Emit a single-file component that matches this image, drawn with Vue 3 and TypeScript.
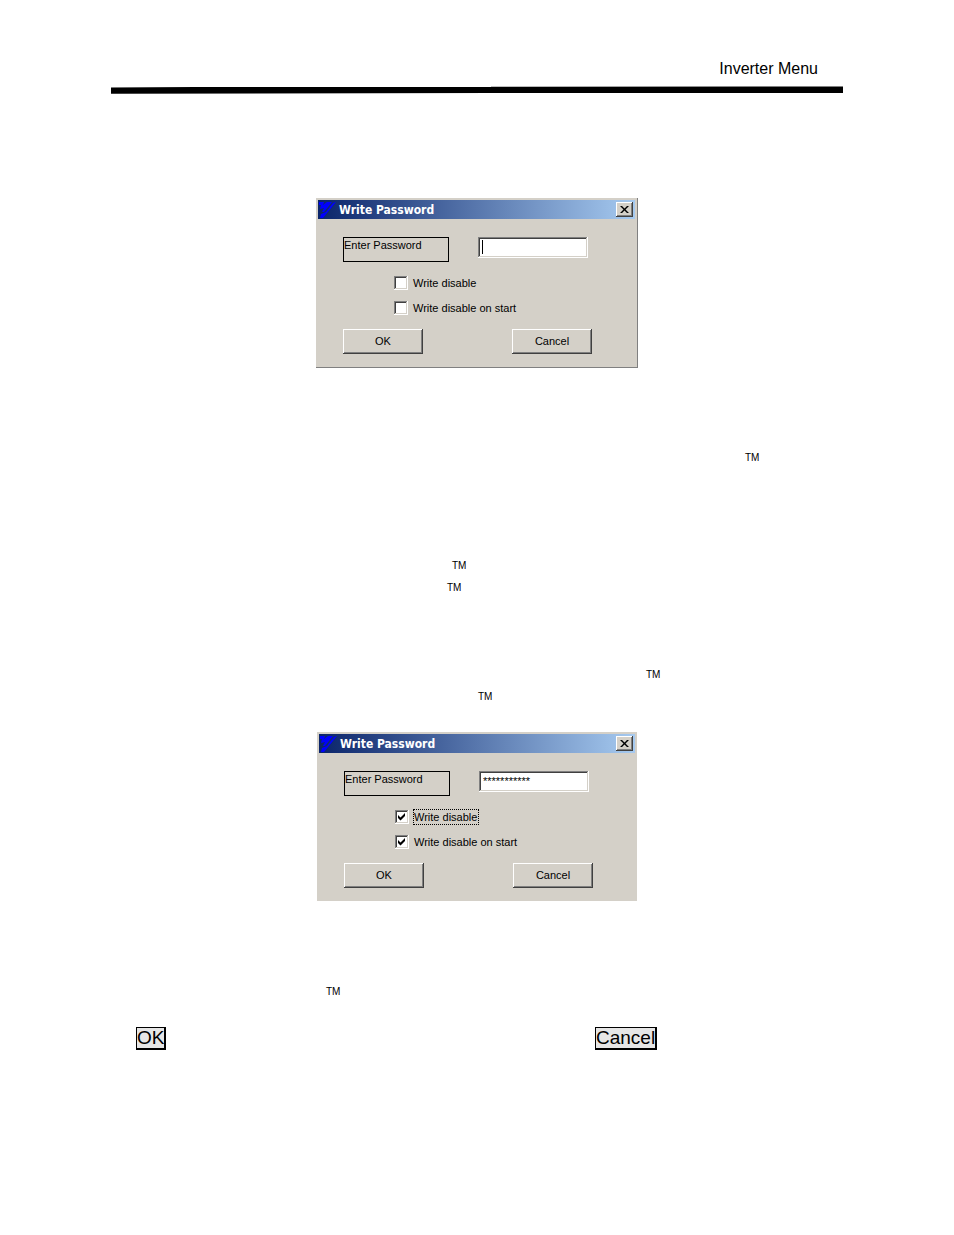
<script setup lang="ts">
import { reactive } from 'vue'

interface PasswordDialog {
  id: string
  password: string
  disable: boolean
  disableOnStart: boolean
  caret: boolean
  framed: boolean
  focused: boolean
}

const dialogs = reactive<PasswordDialog[]>([
  { id: 'empty', password: '', disable: false, disableOnStart: false, caret: true, framed: true, focused: false },
  { id: 'filled', password: '***********', disable: true, disableOnStart: true, caret: false, framed: false, focused: true },
])

const marks: Record<string, { name: string; left: number }[]> = {
  empty: [
    { name: 'first', left: 634 },
    { name: 'second', left: 341 },
    { name: 'third', left: 336 },
    { name: 'fourth', left: 535 },
    { name: 'fifth', left: 367 },
  ],
  filled: [{ name: 'last', left: 215 }],
}
</script>

<template>
  <div class="page">
    <header class="head">
      <span class="chapter">Inverter Menu</span>
      <svg class="rule" viewBox="0 0 732 8" preserveAspectRatio="none" aria-hidden="true">
        <path d="M0 1.6L85 1L380 1L380 .8L732 .4V7H380L0 7.8Z" />
      </svg>
    </header>

    <template v-for="d in dialogs" :key="d.id">
      <section class="dialog" :class="{ framed: d.framed }">
        <div class="titlebar">
          <svg class="logo" viewBox="0 0 18 18" aria-hidden="true">
            <path d="M1 1H6L5 4L9 1H14L6 11L4 11L6 7L2 8L3 4H1Z" />
            <path d="M15 2L18 1L5 17H2L3 13L8 11Z" />
          </svg>
          <h2>Write Password</h2>
          <button class="close" type="button" aria-label="Close">
            <svg viewBox="0 0 9 7" aria-hidden="true">
              <path d="M0 0H2L4.5 2.5L7 0H9L5.5 3.5L9 7H7L4.5 4.5L2 7H0L3.5 3.5Z" />
            </svg>
          </button>
        </div>
        <form class="body" @submit.prevent>
          <div class="entry">
            <label class="caption" :for="d.id + '-password'">Enter Password</label>
            <div class="field">
              <input :id="d.id + '-password'" v-model="d.password" type="text" autocomplete="off" />
              <span v-if="d.caret" class="caret"></span>
            </div>
          </div>
          <div class="options">
            <label class="option">
              <span class="box">
                <input v-model="d.disable" type="checkbox" />
                <svg v-if="d.disable" viewBox="0 0 9 9" aria-hidden="true"><path d="M1 3L3.5 5.5L8 1V4L3.5 8.5L1 6Z" /></svg>
              </span>
              <span class="option-text" :class="{ focused: d.focused }">Write disable</span>
            </label>
            <label class="option">
              <span class="box">
                <input v-model="d.disableOnStart" type="checkbox" />
                <svg v-if="d.disableOnStart" viewBox="0 0 9 9" aria-hidden="true"><path d="M1 3L3.5 5.5L8 1V4L3.5 8.5L1 6Z" /></svg>
              </span>
              <span class="option-text">Write disable on start</span>
            </label>
          </div>
          <div class="actions">
            <button class="push" type="button">OK</button>
            <button class="push" type="button">Cancel</button>
          </div>
        </form>
      </section>

      <div class="marks" :class="d.id">
        <div v-for="m in marks[d.id]" :key="m.name" class="mark" :class="m.name" :style="{ paddingLeft: m.left + 'px' }">TM</div>
      </div>
    </template>

    <div class="keys">
      <div><button class="key" type="button">OK</button></div>
      <div><button class="key" type="button">Cancel</button></div>
    </div>
  </div>
</template>

<style>
body {
  margin: 0;
  background: #fff;
}
</style>

<style scoped>
.page {
  box-sizing: border-box;
  padding: 60px 111px;
  color: #000;
  font-family: "Liberation Sans", Arial, sans-serif;
}
.head {
  display: flex;
  flex-direction: column;
  margin-bottom: 104px;
}
.chapter {
  padding-right: 25px;
  text-align: right;
  font-size: 16px;
  line-height: 18px;
}
.rule {
  display: block;
  width: 100%;
  height: 8px;
  margin-top: 8px;
}
.dialog {
  box-sizing: border-box;
  width: 320px;
  min-height: 169px;
  margin: 0 auto;
  padding: 2px;
  background: #d4d0c8;
}
.dialog.framed {
  width: 322px;
  min-height: 170px;
  border-right: 1px solid #808080;
  border-bottom: 1px solid #808080;
}
.titlebar {
  display: flex;
  align-items: center;
  height: 19px;
  padding-right: 2px;
  background: linear-gradient(90deg, #0a246a, #a6caf0);
}
.logo {
  width: 18px;
  height: 18px;
  fill: #00f;
}
h2 {
  flex: 1;
  margin: 0 0 0 3px;
  color: #fff;
  font: bold 12px/20px "DejaVu Sans Condensed", "DejaVu Sans", sans-serif;
}
.close {
  display: flex;
  align-items: center;
  justify-content: center;
  width: 17px;
  height: 15px;
  padding: 0;
  border: 0;
  background: #d4d0c8;
  box-shadow: inset -1px -1px #404040, inset 1px 1px #fff, inset -2px -2px #808080;
}
.close svg {
  width: 9px;
  height: 7px;
}
.body {
  padding: 18px 25px 0;
  font-size: 11px;
}
.entry {
  display: flex;
  gap: 29px;
}
.caption {
  box-sizing: border-box;
  width: 106px;
  height: 25px;
  border: 1px solid #000;
  line-height: 15px;
}
.field {
  position: relative;
  width: 110px;
  height: 21px;
}
.field input {
  box-sizing: border-box;
  display: block;
  width: 100%;
  height: 100%;
  margin: 0;
  padding: 0 4px 2px;
  border: 0;
  outline: 0;
  background: #fff;
  box-shadow: inset -1px -1px #fff, inset 1px 1px #808080, inset -2px -2px #d4d0c8, inset 2px 2px #404040;
  color: #000;
  font: 11px/15px "Liberation Sans", Arial, sans-serif;
}
.caret {
  position: absolute;
  top: 3px;
  left: 4px;
  width: 1px;
  height: 14px;
  background: #000;
}
.options {
  display: flex;
  flex-direction: column;
  gap: 9px;
  padding: 13px 0 0 51px;
}
.option {
  display: flex;
  align-items: center;
  gap: 4px;
  height: 16px;
}
.box {
  position: relative;
  width: 14px;
  height: 14px;
}
.box input {
  appearance: none;
  display: block;
  width: 14px;
  height: 14px;
  margin: 0;
  background: #fff;
  box-shadow: inset -1px -1px #fff, inset 1px 1px #808080, inset -2px -2px #d4d0c8, inset 2px 2px #404040;
}
.box svg {
  position: absolute;
  top: 2px;
  left: 2px;
  width: 9px;
  height: 9px;
  pointer-events: none;
}
.option-text {
  box-sizing: border-box;
  padding-right: 1px;
  border: 1px solid transparent;
  line-height: 14px;
}
.option-text.focused {
  border: 1px dotted #000;
}
.actions {
  display: flex;
  justify-content: space-between;
  width: 249px;
  margin-top: 13px;
}
.push {
  width: 80px;
  height: 25px;
  padding: 0 0 1px;
  border: 0;
  background: #d4d0c8;
  box-shadow: inset -1px -1px #404040, inset 1px 1px #fff, inset -2px -2px #808080;
  color: #000;
  font: 11px/15px "Liberation Sans", Arial, sans-serif;
}
.marks.empty {
  padding: 79px 0 24px;
}
.marks.filled {
  padding: 80px 0 24px;
}
.mark {
  font-size: 10px;
  line-height: 22px;
}
.mark.second {
  margin-top: 86px;
}
.mark.fourth {
  margin-top: 65px;
}
.keys {
  display: grid;
  grid-template-columns: 459fr 248fr;
  padding-left: 25px;
}
.key {
  display: block;
  height: 23px;
  padding: 0;
  border: 1px solid #000;
  border-right-width: 2px;
  border-bottom-width: 2px;
  background: #e6e6e6;
  color: #000;
  font: 19px/20px "Liberation Sans", Arial, sans-serif;
}
</style>
